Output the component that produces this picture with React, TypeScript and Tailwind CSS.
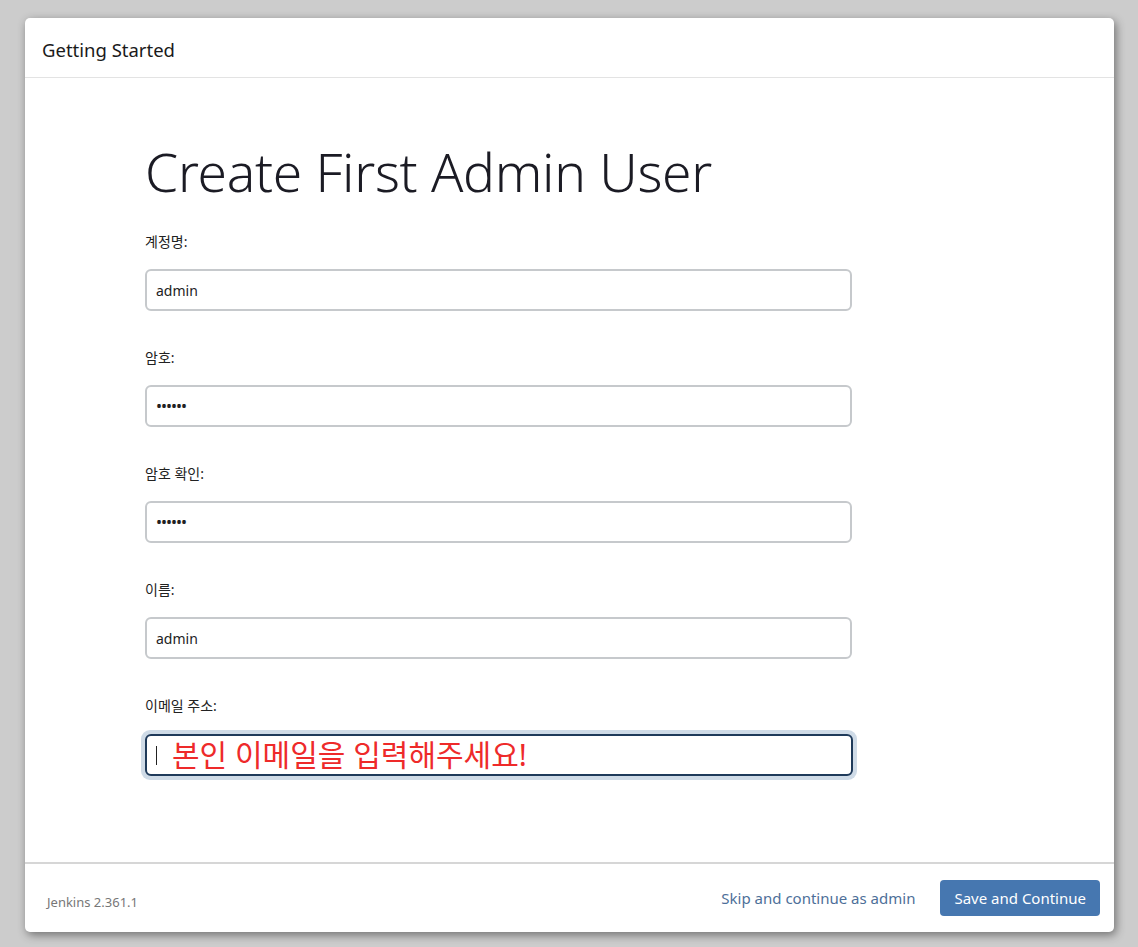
const font = { fontFamily: '"Noto Sans", "Noto Sans CJK KR", sans-serif' }

function Field({ label, value, password }: { label: string; value: string; password?: boolean }) {
  return (
    <div className="mb-[37px]">
      <label className="block text-[14px] leading-[20px] text-[#222] mb-[17px]">{label}</label>
      <div className="flex h-[42px] w-[707px] items-center rounded-[6px] border-2 border-[#c6c9cc] px-[9px] text-[14px] text-[#222]">
        {password ? <span className="text-[16px] tracking-[-1px]">••••••</span> : value}
      </div>
    </div>
  )
}

export default function App() {
  return (
    <div className="h-[947px] w-[1138px] overflow-hidden bg-[#cccccc] pl-[25px] pt-[18px]" style={font}>
      <div className="flex h-[914px] w-[1089px] flex-col rounded-[5px] bg-white shadow-[2px_3px_10px_rgba(0,0,0,0.45)]">
        {/* header */}
        <div className="flex h-[60px] items-center border-b border-[#e3e3e3] px-[17px] pt-[4px] text-[18.5px] text-[#1a1a1a]">
          Getting Started
        </div>

        {/* body */}
        <div className="flex-1 pl-[120px] pt-[58px]">
          <h1 className="mb-[24px] text-[53.3px] font-light leading-[72px] tracking-[-0.3px] text-[#1b1b24]">
            Create First Admin User
          </h1>
          <Field label="계정명:" value="admin" />
          <Field label="암호:" value="" password />
          <Field label="암호 확인:" value="" password />
          <Field label="이름:" value="admin" />
          <div>
            <label className="block text-[14px] leading-[20px] text-[#222] mb-[14px]">이메일 주소:</label>
            <div className="w-[716px] -ml-[4px] rounded-[9px] bg-[#cfdbe7] p-[4px]">
              <div className="flex h-[42px] items-center rounded-[6px] border-2 border-[#1f3a5a] bg-white px-[9px]">
                <span className="h-[19px] w-[1px] bg-[#222]" />
                <span className="ml-[15px] text-[30px] font-normal leading-none text-[#ee2a2a]">본인 이메일을 입력해주세요!</span>
              </div>
            </div>
          </div>
        </div>

        {/* footer */}
        <div className="flex h-[70px] items-center border-t-2 border-[#d6d6d6] pl-[22px] pr-[14px]">
          <span className="mt-[10px] text-[13px] text-[#777]">Jenkins 2.361.1</span>
          <span className="ml-auto text-[15px] text-[#4d6f99]">Skip and continue as admin</span>
          <button className="ml-[25px] h-[36px] rounded-[4px] bg-[#4677b0] px-[14px] text-[15px] text-white">
            Save and Continue
          </button>
        </div>
      </div>
    </div>
  )
}
